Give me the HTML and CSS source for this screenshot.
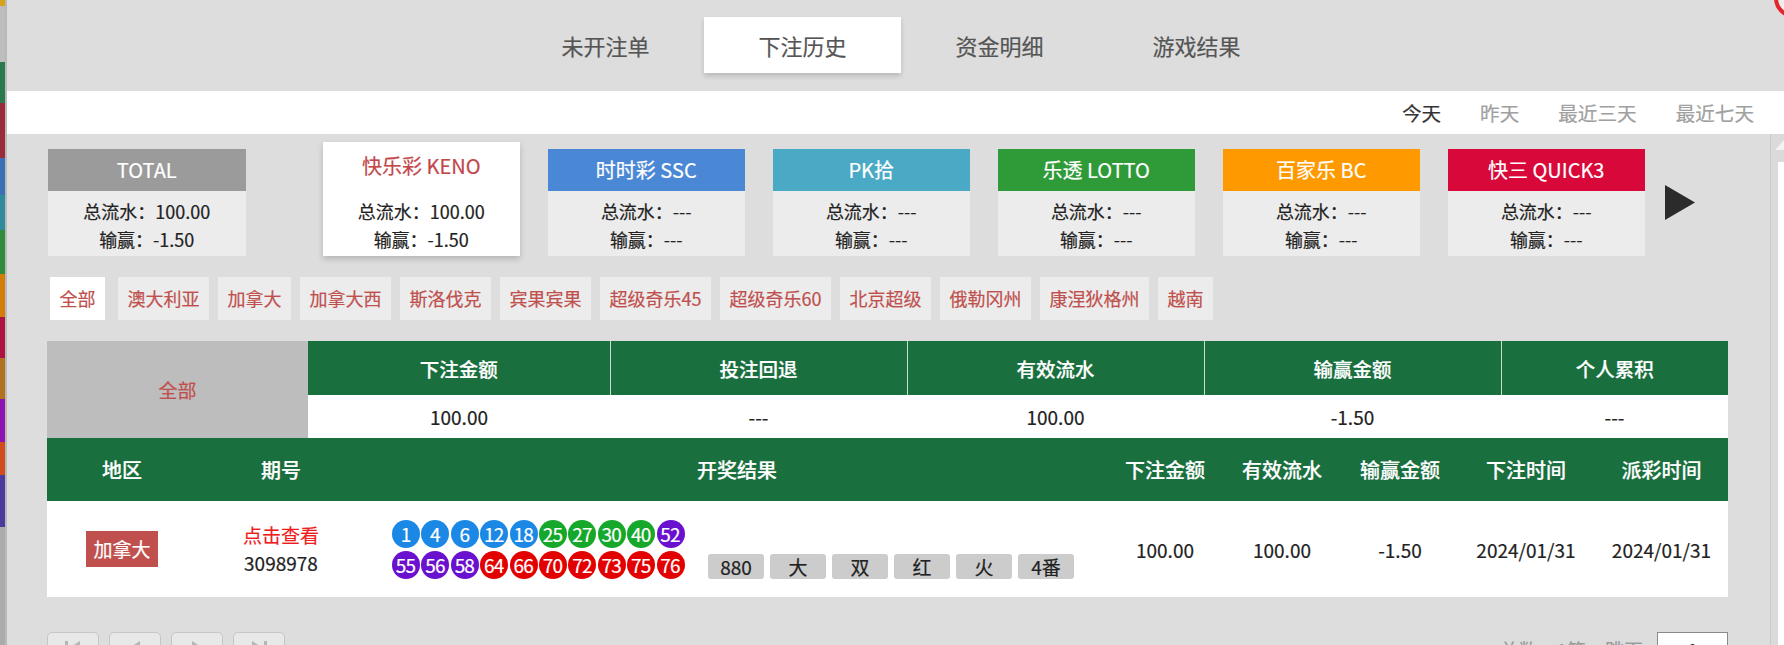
FILE: index.html
```html
<!DOCTYPE html>
<html lang="zh-CN">
<head>
<meta charset="utf-8">
<title>下注历史</title>
<link rel="stylesheet" href="styles.css">
</head>
<body>
<div class="app">
  <aside class="strip">
    <i class="s1"></i><i class="s2"></i><i class="s3"></i><i class="s4"></i><i class="s5"></i><i class="s6"></i><i class="s7"></i><i class="s8"></i><i class="s9"></i><i class="s10"></i><i class="s11"></i><i class="s12"></i><i class="s13"></i><i class="s14"></i>
  </aside>
  <div class="main">
    <nav class="tabs">
      <a class="tab">未开注单</a>
      <a class="tab active">下注历史</a>
      <a class="tab">资金明细</a>
      <a class="tab">游戏结果</a>
    </nav>
    <div class="datebar">
      <span class="on">今天</span>
      <span>昨天</span>
      <span>最近三天</span>
      <span>最近七天</span>
    </div>
    <div class="body">
      <div class="content">
        <div class="cards">
          <div class="card total">
            <div class="card-h">TOTAL</div>
            <div class="card-b"><div>总流水：100.00</div><div>输赢：-1.50</div></div>
          </div>
          <div class="card keno active">
            <div class="card-h">快乐彩 KENO</div>
            <div class="card-b"><div>总流水：100.00</div><div>输赢：-1.50</div></div>
          </div>
          <div class="card ssc">
            <div class="card-h">时时彩 SSC</div>
            <div class="card-b"><div>总流水：---</div><div>输赢：---</div></div>
          </div>
          <div class="card pk">
            <div class="card-h">PK拾</div>
            <div class="card-b"><div>总流水：---</div><div>输赢：---</div></div>
          </div>
          <div class="card lotto">
            <div class="card-h">乐透 LOTTO</div>
            <div class="card-b"><div>总流水：---</div><div>输赢：---</div></div>
          </div>
          <div class="card bc">
            <div class="card-h">百家乐 BC</div>
            <div class="card-b"><div>总流水：---</div><div>输赢：---</div></div>
          </div>
          <div class="card q3">
            <div class="card-h">快三 QUICK3</div>
            <div class="card-b"><div>总流水：---</div><div>输赢：---</div></div>
          </div>
          <svg class="next" width="30" height="35" viewBox="0 0 30 35"><polygon points="0,0 30,17.5 0,35" fill="#2b2b2b"/></svg>
        </div>

        <div class="filters">
          <span class="f active">全部</span>
          <span class="f">澳大利亚</span>
          <span class="f">加拿大</span>
          <span class="f">加拿大西</span>
          <span class="f">斯洛伐克</span>
          <span class="f">宾果宾果</span>
          <span class="f">超级奇乐45</span>
          <span class="f">超级奇乐60</span>
          <span class="f">北京超级</span>
          <span class="f">俄勒冈州</span>
          <span class="f">康涅狄格州</span>
          <span class="f">越南</span>
        </div>

        <table class="summary">
          <colgroup>
            <col class="sc0"><col class="sc1"><col class="sc2"><col class="sc3"><col class="sc4"><col class="sc5">
          </colgroup>
          <tr class="sh">
            <td class="all" rowspan="2">全部</td>
            <th>下注金额</th><th>投注回退</th><th>有效流水</th><th>输赢金额</th><th>个人累积</th>
          </tr>
          <tr class="sd">
            <td>100.00</td><td>---</td><td>100.00</td><td>-1.50</td><td>---</td>
          </tr>
        </table>

        <table class="records">
          <colgroup>
            <col class="c1"><col class="c2"><col class="c3"><col class="c4"><col class="c5"><col class="c6"><col class="c7"><col class="c8">
          </colgroup>
          <tr class="rh">
            <th>地区</th><th>期号</th><th>开奖结果</th><th>下注金额</th><th>有效流水</th><th>输赢金额</th><th>下注时间</th><th>派彩时间</th>
          </tr>
          <tr class="rd">
            <td><span class="region">加拿大</span></td>
            <td><div class="link">点击查看</div><div class="num">3098978</div></td>
            <td>
              <div class="result">
                <div class="balls">
                  <span class="ball b">1</span><span class="ball b">4</span><span class="ball b">6</span><span class="ball b">12</span><span class="ball b">18</span><span class="ball g">25</span><span class="ball g">27</span><span class="ball g">30</span><span class="ball g">40</span><span class="ball p">52</span>
                  <span class="ball p">55</span><span class="ball p">56</span><span class="ball p">58</span><span class="ball r">64</span><span class="ball r">66</span><span class="ball r">70</span><span class="ball r">72</span><span class="ball r">73</span><span class="ball r">75</span><span class="ball r">76</span>
                </div>
                <div class="tags">
                  <span class="tag">880</span><span class="tag">大</span><span class="tag">双</span><span class="tag">红</span><span class="tag">火</span><span class="tag">4番</span>
                </div>
              </div>
            </td>
            <td>100.00</td><td>100.00</td><td>-1.50</td><td>2024/01/31</td><td>2024/01/31</td>
          </tr>
        </table>

        <div class="pager">
          <div class="pbtns">
            <button class="pb"><svg width="20" height="16" viewBox="0 0 20 16"><rect x="2" y="1" width="3" height="14" fill="#b5b5b5"/><polygon points="17,1 6,8 17,15" fill="#b5b5b5"/></svg></button>
            <button class="pb"><svg width="20" height="16" viewBox="0 0 20 16"><polygon points="15,1 4,8 15,15" fill="#b5b5b5"/></svg></button>
            <button class="pb"><svg width="20" height="16" viewBox="0 0 20 16"><polygon points="5,1 16,8 5,15" fill="#b5b5b5"/></svg></button>
            <button class="pb"><svg width="20" height="16" viewBox="0 0 20 16"><polygon points="3,1 14,8 3,15" fill="#b5b5b5"/><rect x="15" y="1" width="3" height="14" fill="#b5b5b5"/></svg></button>
          </div>
          <div class="jump">
            <span class="total-txt">总数：1笔，跳页</span>
            <span class="page-input">1</span>
          </div>
        </div>
      </div>
      <div class="scrollbar"><div class="sb-up"></div></div>
    </div>
  </div>
  <div class="corner"></div>
</div>
</body>
</html>
```

FILE: styles.css
```css
* { box-sizing: border-box; }
html, body { margin: 0; padding: 0; }
body {
  width: 1784px;
  height: 645px;
  overflow: hidden;
  background: #dddddd;
  font-family: "Noto Sans CJK SC", "Noto Sans", sans-serif;
  color: #222;
  -webkit-text-stroke: 0.2px currentColor;
}
.app {
  position: relative;
  display: flex;
  width: 1784px;
  height: 645px;
}

/* left colored strip */
.strip {
  width: 7px;
  flex: none;
  display: flex;
  flex-direction: column;
  border-right: 2px solid #b9b9b9;
}
.strip i { display: block; width: 5px; }
.s1 { height: 6px; background: #d6a21a; }
.s2 { height: 56px; background: #bdbdbd; }
.s3 { height: 41px; background: #2b7a4c; }
.s4 { height: 55px; background: #9a2b3b; }
.s5 { height: 37px; background: #3b6fb6; }
.s6 { height: 35px; background: #2f8a9c; }
.s7 { height: 44px; background: #2f8c3c; }
.s8 { height: 43px; background: #d37c08; }
.s9 { height: 41px; background: #ad1240; }
.s10 { height: 41px; background: #b0721c; }
.s11 { height: 43px; background: #8d14b3; }
.s12 { height: 33px; background: #d14b1c; }
.s13 { height: 52px; background: #4b3b9c; }
.s14 { flex: 1; background: #ababab; }

.main {
  flex: 1;
  display: flex;
  flex-direction: column;
  min-width: 0;
}

/* top tabs */
.tabs {
  height: 91px;
  display: flex;
  justify-content: center;
  align-items: flex-start;
  padding: 17px 0 0 11px;
}
.tab {
  width: 197px;
  height: 56px;
  line-height: 56px;
  text-align: center;
  font-size: 22px;
  color: #555;
}
.tab.active {
  background: #fff;
  box-shadow: 0 3px 5px rgba(0, 0, 0, 0.16);
}

/* date bar */
.datebar {
  height: 43px;
  background: #fff;
  display: flex;
  justify-content: flex-end;
  align-items: center;
  gap: 39px;
  padding-right: 30px;
  font-size: 19.6px;
  color: #a0a0a0;
}
.datebar .on { color: #333; }

.body {
  flex: 1;
  display: flex;
  min-height: 0;
}
.content {
  flex: 1;
  padding: 15px 42px 0 40px;
  min-width: 0;
}

/* cards */
.cards {
  display: flex;
  align-items: flex-start;
  gap: 27.5px;
  padding-left: 1px;
}
.card {
  width: 197.5px;
  flex: none;
}
.card-h {
  height: 42px;
  line-height: 42px;
  text-align: center;
  font-size: 20px;
  color: #fff;
}
.card-b {
  background: #ececec;
  padding: 6px 0 3px;
  line-height: 28px;
  font-size: 18px;
  text-align: center;
  color: #222;
}
.total { margin-right: 49.5px; }
.total .card-h { background: #9b9b9b; }
.ssc .card-h { background: #4a88d6; }
.pk .card-h { background: #4aaac6; }
.lotto .card-h { background: #2e9a38; }
.bc .card-h { background: #ff9900; }
.q3 .card-h { background: #d8083a; }
.card.active {
  margin-top: -7px;
  background: #fff;
  box-shadow: 0 3px 6px rgba(0, 0, 0, 0.18);
}
.card.active .card-h {
  height: 49px;
  line-height: 48px;
  color: #c2474b;
}
.card.active .card-b { background: #fff; }
.next {
  align-self: center;
  margin-left: -8px;
  flex: none;
}

/* region filters */
.filters {
  display: flex;
  gap: 9px;
  margin: 21px 0 0 3px;
}
.f {
  height: 43px;
  line-height: 43px;
  padding: 0 9.5px;
  background: #ececec;
  color: #c0504d;
  font-size: 18px;
}
.f.active {
  background: #fff;
  margin-right: 4px;
}

/* summary table */
table {
  border-collapse: collapse;
  border-spacing: 0;
  table-layout: fixed;
  width: 1681px;
}
.summary { margin-top: 21px; }
.sc0 { width: 261px; }
.sc1 { width: 302px; }
.sc2, .sc3, .sc4 { width: 297px; }
.sc5 { width: 227px; }
.summary .all {
  background: #bdbdbd;
  color: #c0504d;
  font-size: 19px;
  text-align: center;
}
.summary th {
  height: 54px;
  background: #1a6f3f;
  color: #fff;
  font-size: 19.5px;
  font-weight: 500;
  text-align: center;
  border-left: 1px solid #c9dccf;
  padding: 0;
}
.summary .sh .all + th { border-left: none; }
.summary .sd td {
  height: 43px;
  background: #fff;
  text-align: center;
  font-size: 19px;
  color: #222;
  padding: 0;
}

/* records table */
.c1 { width: 150px; }
.c2 { width: 168px; }
.c3 { width: 744px; }
.c4 { width: 112px; }
.c5 { width: 122px; }
.c6 { width: 114px; }
.c7 { width: 138px; }
.c8 { width: 133px; }
.records th {
  height: 63px;
  background: #1a6f3f;
  color: #fff;
  font-size: 20px;
  font-weight: 500;
  text-align: center;
  padding: 0;
}
.records td {
  height: 96px;
  background: #fff;
  text-align: center;
  font-size: 19px;
  color: #222;
  padding: 0;
}
.region {
  display: inline-block;
  background: #c0504d;
  color: #fff;
  font-size: 19px;
  height: 36px;
  line-height: 36px;
  padding: 0 7px;
}
.link, .num { line-height: 28px; }
.link { color: #ee1c1c; }

.result {
  display: flex;
  justify-content: center;
  align-items: flex-end;
  gap: 22px;
  padding-right: 8px;
}
.balls {
  width: 294px;
  display: flex;
  flex-wrap: wrap;
  column-gap: 1.4px;
  row-gap: 3px;
}
.ball {
  width: 28px;
  height: 28px;
  border-radius: 50%;
  color: #fff;
  font-size: 19px;
  line-height: 28px;
  text-align: center;
  letter-spacing: -0.8px;
  text-indent: -0.8px;
}
.ball.b { background: #1b88e6; }
.ball.g { background: #15a82a; }
.ball.p { background: #6a10cf; }
.ball.r { background: #e20000; }
.tags {
  display: flex;
  gap: 6px;
}
.tag {
  width: 56px;
  height: 25px;
  line-height: 25px;
  background: #cccccc;
  border-radius: 3px;
  font-size: 19px;
  color: #222;
  text-align: center;
}

/* pager */
.pager {
  margin-top: 35px;
  display: flex;
  justify-content: space-between;
  align-items: flex-start;
}
.pbtns {
  display: flex;
  gap: 10px;
}
.pb {
  width: 52px;
  height: 32px;
  background: #e8e8e8;
  border: 1px solid #c6c6c6;
  border-radius: 5px;
  padding: 0;
  display: flex;
  align-items: center;
  justify-content: center;
}
.jump {
  display: flex;
  align-items: center;
  gap: 14px;
}
.total-txt {
  font-size: 19px;
  color: #9a9a9a;
  line-height: 36px;
}
.page-input {
  width: 71px;
  height: 36px;
  line-height: 34px;
  border: 1px solid #8a8a8a;
  background: #fff;
  text-align: center;
  font-size: 19px;
  color: #222;
}

/* fake scrollbar */
.scrollbar {
  width: 14px;
  flex: none;
  border-left: 1px solid #c9c9c9;
  background: linear-gradient(to right, #dadada 7px, #ffffff 7px);
}
.sb-up {
  height: 28px;
  background: #dadada;
  position: relative;
}
.sb-up::after {
  content: "";
  position: absolute;
  left: 4px;
  top: 6px;
  border-left: 9px solid transparent;
  border-right: 9px solid transparent;
  border-bottom: 10px solid #f2f2f2;
}

/* top-right partial badge */
.corner {
  position: absolute;
  left: 1774px;
  top: -22px;
  width: 40px;
  height: 40px;
  border-radius: 50%;
  border: 4px solid #e2262b;
  background: #eeeeee;
}
```
